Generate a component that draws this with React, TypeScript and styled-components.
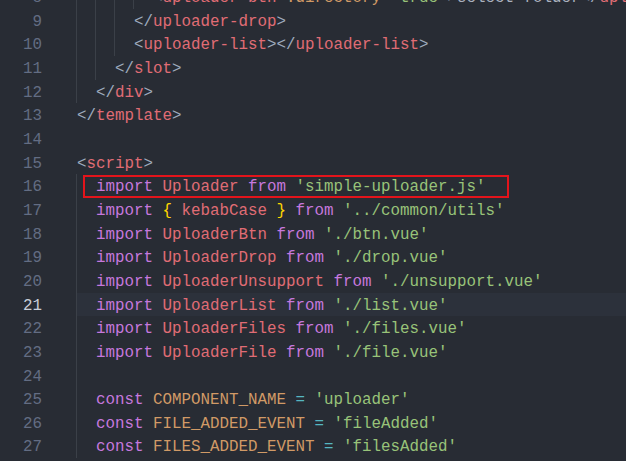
import React from 'react';
import styled, { createGlobalStyle } from 'styled-components';

const LINE_H = 23.67;
const INDENT_W = 19;

const GlobalStyle = createGlobalStyle`
  html, body {
    margin: 0;
    padding: 0;
    background: #282c34;
    overflow: hidden;
  }
`;

const palette: Record<string, string> = {
  p: '#abb2bf',
  b: '#9eaabd',
  t: '#e06c75',
  a: '#d19a66',
  s: '#98c379',
  k: '#c678dd',
  v: '#e06c75',
  y: '#ffd700',
  o: '#56b6c2',
  c: '#d19a66',
};

type Tok = [keyof typeof palette, string];
interface Line {
  n: number;
  indent: number;
  guides: number;
  toks: Tok[];
  active?: boolean;
  boxed?: boolean;
}

const imp = (name: string, path: string): Tok[] => [
  ['k', 'import'], ['p', ' '], ['v', name], ['p', ' '], ['k', 'from'], ['p', ' '], ['s', `'${path}'`],
];
const cst = (name: string, val: string): Tok[] => [
  ['k', 'const'], ['p', ' '], ['c', name], ['p', ' '], ['o', '='], ['p', ' '], ['s', `'${val}'`],
];

const lines: Line[] = [
  { n: 8, indent: 8, guides: 4, toks: [['b', '<'], ['t', 'uploader-btn'], ['p', ' '], ['a', ':directory'], ['p', '='], ['s', '"true"'], ['b', '>'], ['p', 'select folder'], ['b', '</'], ['t', 'uploader-btn'], ['b', '>']] },
  { n: 9, indent: 6, guides: 3, toks: [['b', '</'], ['t', 'uploader-drop'], ['b', '>']] },
  { n: 10, indent: 6, guides: 3, toks: [['b', '<'], ['t', 'uploader-list'], ['b', '></'], ['t', 'uploader-list'], ['b', '>']] },
  { n: 11, indent: 4, guides: 2, toks: [['b', '</'], ['t', 'slot'], ['b', '>']] },
  { n: 12, indent: 2, guides: 1, toks: [['b', '</'], ['t', 'div'], ['b', '>']] },
  { n: 13, indent: 0, guides: 0, toks: [['b', '</'], ['t', 'template'], ['b', '>']] },
  { n: 14, indent: 0, guides: 0, toks: [] },
  { n: 15, indent: 0, guides: 0, toks: [['b', '<'], ['t', 'script'], ['b', '>']] },
  { n: 16, indent: 2, guides: 1, toks: imp('Uploader', 'simple-uploader.js'), boxed: true },
  { n: 17, indent: 2, guides: 1, toks: [['k', 'import'], ['p', ' '], ['y', '{'], ['p', ' '], ['v', 'kebabCase'], ['p', ' '], ['y', '}'], ['p', ' '], ['k', 'from'], ['p', ' '], ['s', "'../common/utils'"]] },
  { n: 18, indent: 2, guides: 1, toks: imp('UploaderBtn', './btn.vue') },
  { n: 19, indent: 2, guides: 1, toks: imp('UploaderDrop', './drop.vue') },
  { n: 20, indent: 2, guides: 1, toks: imp('UploaderUnsupport', './unsupport.vue') },
  { n: 21, indent: 2, guides: 1, toks: imp('UploaderList', './list.vue'), active: true },
  { n: 22, indent: 2, guides: 1, toks: imp('UploaderFiles', './files.vue') },
  { n: 23, indent: 2, guides: 1, toks: imp('UploaderFile', './file.vue') },
  { n: 24, indent: 2, guides: 1, toks: [] },
  { n: 25, indent: 2, guides: 1, toks: cst('COMPONENT_NAME', 'uploader') },
  { n: 26, indent: 2, guides: 1, toks: cst('FILE_ADDED_EVENT', 'fileAdded') },
  { n: 27, indent: 2, guides: 1, toks: cst('FILES_ADDED_EVENT', 'filesAdded') },
];

const Editor = styled.div`
  width: 626px;
  height: 461px;
  overflow: hidden;
  background: #282c34;
  font-family: "Liberation Mono", "DejaVu Sans Mono", monospace;
  font-size: 15.83px;
`;

const Lines = styled.div`
  display: flex;
  flex-direction: column;
  margin-top: -15px;
`;

const Row = styled.div`
  display: flex;
  height: ${LINE_H}px;
  line-height: ${LINE_H + 3}px;
  white-space: pre;
`;

const LineNo = styled.div<{ $active?: boolean }>`
  width: 42px;
  flex: none;
  text-align: right;
  color: ${(p) => (p.$active ? '#c8ced8' : '#636d83')};
  margin-right: 34px;
`;

const guideBg = (n: number) =>
  n === 0
    ? 'none'
    : Array.from({ length: n }, (_, k) => `linear-gradient(#3b4048, #3b4048) ${k * INDENT_W}px 0 / 1px 100% no-repeat`).join(', ');

const Code = styled.div<{ $guides: number; $active?: boolean }>`
  position: relative;
  flex: 1;
  padding-left: 1px;
  background: ${(p) => guideBg(p.$guides)};
  background-color: ${(p) => (p.$active ? '#2c313b' : 'transparent')};
`;

const Tk = styled.span<{ $c: string }>`
  color: ${(p) => p.$c};
`;

const Mark = styled.div`
  position: absolute;
  left: 7px;
  top: 1px;
  width: 426px;
  height: 23px;
  box-sizing: border-box;
  border: 2px solid #e3141b;
  pointer-events: none;
`;

export default function App() {
  return (
    <>
      <GlobalStyle />
      <Editor>
        <Lines>
          {lines.map((l) => (
            <Row key={l.n}>
              <LineNo $active={l.active}>{l.n}</LineNo>
              <Code $guides={l.guides} $active={l.active}>
                {' '.repeat(l.indent)}
                {l.toks.map(([c, t], i) => (
                  <Tk key={i} $c={palette[c]}>{t}</Tk>
                ))}
                {l.boxed && <Mark />}
              </Code>
            </Row>
          ))}
        </Lines>
      </Editor>
    </>
  );
}
